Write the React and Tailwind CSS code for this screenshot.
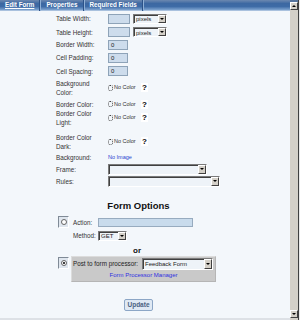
import React from "react";

function Sep() {
  return <div className="mx-[5px] h-[11px] w-[2px] border-l border-l-[#2c5288] border-r border-r-[#8fb0d6]" />;
}

function Arrow({ up }) {
  return up ? (
    <div className="w-0 h-0 border-l-[2px] border-r-[2px] border-b-[2px] border-l-transparent border-r-transparent border-b-black" />
  ) : (
    <div className="w-0 h-0 border-l-[2px] border-r-[2px] border-t-[2px] border-l-transparent border-r-transparent border-t-black" />
  );
}

function Select({ w, h, text }) {
  return (
    <div className={`flex items-center ${w} ${h} bg-[#eef3f8] border border-t-[#7a7a7a] border-l-[#7a7a7a] border-b-[#ffffff] border-r-[#ffffff] shadow-[inset_1px_1px_0_#404040]`}>
      <div className="flex-1 pl-[2px] pt-[1px] leading-none text-[6px] text-[#222] whitespace-nowrap overflow-hidden">{text}</div>
      <div className="w-[8px] h-full bg-[#d4d0c8] border border-t-[#ffffff] border-l-[#ffffff] border-b-[#404040] border-r-[#404040] flex items-center justify-center">
        <Arrow />
      </div>
    </div>
  );
}

function Input({ w, text }) {
  return (
    <div className={`${w} h-[10px] bg-[#cddcec] border border-[#8ea3b8] pl-[2px] flex items-center leading-none text-[6px] text-[#222]`}>
      {text}
    </div>
  );
}

function Row({ h, label, children }) {
  return (
    <div className={`flex items-center ${h}`}>
      <div className="w-[52px] leading-[9px] text-[6.3px] text-[#333]">{label}</div>
      {children}
    </div>
  );
}

function NoColor() {
  return (
    <div className="flex items-center">
      <div className="w-[5px] h-[6px] border border-dotted border-[#444] rounded-[2px]" />
      <span className="ml-[1px] text-[5.5px] text-[#333] w-[26px]">No Color</span>
      <span className="ml-[1px] px-[1px] bg-white font-bold text-[8px] leading-[9px] text-black">?</span>
    </div>
  );
}

function RadioBox({ checked }) {
  return (
    <div className="w-[11px] h-[12px] bg-[#dfe6ee] border border-t-[#7f8a96] border-l-[#7f8a96] border-b-[#ffffff] border-r-[#ffffff] flex items-center justify-center">
      <div className="w-[6px] h-[6px] rounded-full bg-white border border-[#666] flex items-center justify-center">
        {checked && <div className="w-[2px] h-[2px] rounded-full bg-black" />}
      </div>
    </div>
  );
}

export default function App() {
  return (
    <div className="w-[300px] h-[320px] flex bg-[#f3f7fb] overflow-hidden font-['Liberation_Sans',Arial,sans-serif] text-[6.3px] text-[#333]">
      <div className="w-[290px] flex flex-col">
        <div className="h-[11px] flex items-center pl-[5px] bg-[linear-gradient(to_bottom,#6c88b0_0%,#3d68a2_35%,#3e6ba6_65%,#7fa4d0_100%)] border-b border-b-[#a9c1de] text-white font-bold text-[6.3px]">
          <span className="underline">Edit Form</span>
          <Sep />
          <span>Properties</span>
          <Sep />
          <span>Required Fields</span>
          <Sep />
        </div>

        <div className="pl-[56px] flex flex-col">
          <Row h="h-[13px] mt-[1px]" label="Table Width:">
            <Input w="w-[22px]" />
            <div className="ml-[3px]"><Select w="w-[34px]" h="h-[10px]" text="pixels" /></div>
          </Row>
          <Row h="h-[14px]" label="Table Height:">
            <Input w="w-[22px]" />
            <div className="ml-[3px]"><Select w="w-[34px]" h="h-[10px]" text="pixels" /></div>
          </Row>
          <Row h="h-[11px]" label="Border Width:">
            <Input w="w-[20px]" text="0" />
          </Row>
          <Row h="h-[15px]" label="Cell Padding:">
            <Input w="w-[20px]" text="0" />
          </Row>
          <Row h="h-[12px]" label="Cell Spacing:">
            <Input w="w-[20px]" text="0" />
          </Row>
          <Row h="h-[21px]" label={<>Background<br />Color:</>}>
            <NoColor />
          </Row>
          <Row h="h-[12px]" label="Border Color:">
            <NoColor />
          </Row>
          <Row h="h-[15px]" label={<>Border Color<br />Light:</>}>
            <NoColor />
          </Row>
          <Row h="h-[19px] mt-[7px]" label={<>Border Color<br />Dark:</>}>
            <NoColor />
          </Row>
          <Row h="h-[12px]" label="Background:">
            <span className="text-[5.5px] text-[#2b3fd0]">No Image</span>
          </Row>
          <Row h="h-[12px]" label="Frame:">
            <Select w="w-[99px]" h="h-[11px]" text="" />
          </Row>
          <Row h="h-[12px]" label="Rules:">
            <Select w="w-[112px]" h="h-[11px]" text="" />
          </Row>
        </div>

        <div className="w-[277px] mt-[11px] h-[16px] flex items-center justify-center font-bold text-[9.5px] text-[#111]">
          Form Options
        </div>

        <div className="flex pl-[58px] mt-[2px]">
          <RadioBox />
          <div className="ml-[4px] flex flex-col">
            <div className="h-[13px] flex items-center">
              <span className="w-[25px] text-[6.3px]">Action:</span>
              <div className="w-[95px] h-[9px] bg-[#c8dbec] border border-[#97abbf]" />
            </div>
            <div className="h-[13px] flex items-center">
              <span className="w-[25px] text-[6.3px]">Method:</span>
              <Select w="w-[29px]" h="h-[10px]" text="GET" />
            </div>
          </div>
        </div>

        <div className="w-[274px] mt-[3px] h-[11px] flex items-center justify-center font-bold text-[8px] text-[#111]">
          or
        </div>

        <div className="flex pl-[58px]">
          <div className="mt-[1px]"><RadioBox checked /></div>
          <div className="ml-[2px] w-[145px] h-[26px] bg-[#c9c9c9] border border-t-[#dcdcdc] border-l-[#dcdcdc] border-b-[#b5b5b5] border-r-[#b5b5b5] flex flex-col">
            <div className="h-[14px] flex items-center pl-[1px]">
              <span className="w-[69px] text-[6.3px] text-[#222] whitespace-nowrap">Post to form processor:</span>
              <Select w="w-[71px]" h="h-[12px]" text="Feedback Form" />
            </div>
            <div className="h-[11px] flex items-center justify-center text-[6px] text-[#3030e0]">
              Form Processor Manager
            </div>
          </div>
        </div>

        <div className="w-[277px] mt-[17px] flex justify-center">
          <div className="w-[29px] h-[12px] rounded-[2px] bg-[#dfe9f4] border border-[#8ca6c6] flex items-center justify-center font-bold text-[6.5px] text-[#4a6282]">
            Update
          </div>
        </div>

        <div className="mt-auto h-[2px] bg-[#dde1e6]" />
      </div>

      <div className="w-[10px] flex">
        <div className="w-[8px] bg-[#d4d0c8] flex flex-col">
          <div className="h-[2px] bg-[#55739c]" />
          <div className="h-[8px] bg-[#d4d0c8] border border-t-[#ffffff] border-l-[#ffffff] border-b-[#404040] border-r-[#404040] flex items-center justify-center">
            <Arrow up />
          </div>
          <div className="flex-1" />
          <div className="h-[8px] mb-[2px] bg-[#d4d0c8] border border-t-[#ffffff] border-l-[#ffffff] border-b-[#404040] border-r-[#404040] flex items-center justify-center">
            <Arrow />
          </div>
        </div>
        <div className="w-[1px] bg-[#404040]" />
        <div className="w-[1px] bg-[#e9e9e9]" />
      </div>
    </div>
  );
}
